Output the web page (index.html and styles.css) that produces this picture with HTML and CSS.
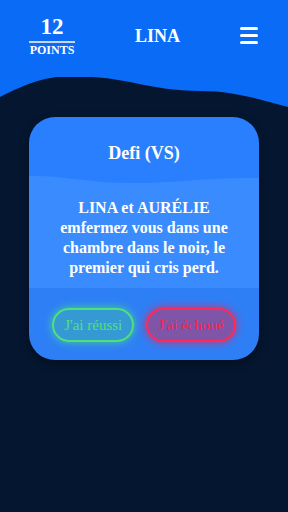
FILE: index.html
```html
<!DOCTYPE html>
<html lang="fr">
<head>
    <meta charset="UTF-8">
    <meta name="viewport" content="width=device-width, initial-scale=1.0">
    <title>Defi</title>
    <link rel="stylesheet" href="styles.css">
</head>
<body>
    <header class="topbar">
        <div class="topbar-row">
            <div class="score">
                <div class="score-num">12</div>
                <div class="score-label">POINTS</div>
            </div>
            <div class="player">LINA</div>
            <div class="burger">
                <span></span>
                <span></span>
                <span></span>
            </div>
        </div>
    </header>
    <!-- vague sous le header -->
    <svg class="header-wave" viewBox="0 0 288 34" preserveAspectRatio="none">
        <path d="M0,0 H288 V31 C262,25 238,15 200,15 C150,15 125,0 72,0 C42,0 20,11 0,21 Z" fill="#0a6cf6"/>
    </svg>

    <div class="card">
        <div class="card-head">
            <h2 class="card-title">Defi (VS)</h2>
            <svg class="card-wave" viewBox="0 0 230 20" preserveAspectRatio="none">
                <path d="M0,12 C30,11 60,19 100,19 C150,19 185,13 230,14 V20 H0 Z" fill="#3a8cfe"/>
            </svg>
        </div>
        <div class="card-body">
            <p>LINA et AURÉLIE emfermez vous dans une chambre dans le noir, le premier qui cris perd.</p>
        </div>
        <div class="card-foot">
            <button class="btn btn-ok">J'ai réussi</button>
            <button class="btn btn-ko">J'ai échoué</button>
        </div>
    </div>
</body>
</html>
```

FILE: styles.css
```css
body {
    font-family: 'Liberation Serif', 'Times New Roman', serif;
    background-color: #051630;
    color: #fff;
    margin: 0;
    padding: 0;
    min-height: 512px;
}

.topbar {
    background-color: #0a6cf6;
    padding: 14px 30px 20px 29px;
}

.topbar-row {
    display: flex;
    justify-content: space-between;
    align-items: center;
}

.score {
    width: 46px;
    text-align: center;
    font-weight: bold;
}

.score-num {
    font-size: 23px;
    line-height: 26px;
    border-bottom: 2px solid #c9d6ea;
    padding-bottom: 1px;
}

.score-label {
    font-size: 12px;
    line-height: 13px;
    padding-top: 1px;
}

.player {
    font-size: 18px;
    font-weight: bold;
    margin-top: 1px;
}

.burger {
    width: 18px;
    display: flex;
    flex-direction: column;
    gap: 4px;
}

.burger span {
    display: block;
    height: 3px;
    background-color: #fff;
    border-radius: 2px;
}

.header-wave {
    display: block;
    width: 100%;
    height: 34px;
    margin-top: -1px;
}

.card {
    width: 230px;
    margin: 7px auto 0;
    border-radius: 26px;
    overflow: hidden;
    box-shadow: 0px 3px 8px rgba(0, 0, 0, 0.35);
}

.card-head {
    background-color: #2a7ffe;
    padding-top: 25px;
}

.card-title {
    margin: 0;
    text-align: center;
    font-size: 18px;
    line-height: 22px;
}

.card-wave {
    display: block;
    width: 100%;
    height: 20px;
}

.card-body {
    background-color: #3a8cfe;
    padding: 14px 24px 10px;
}

.card-body p {
    margin: 0;
    text-align: center;
    font-size: 16px;
    font-weight: bold;
    line-height: 20px;
}

.card-foot {
    background-color: #2e7ff6;
    display: flex;
    justify-content: center;
    gap: 12px;
    padding: 20px 0 18px;
}

.btn {
    font-family: 'Liberation Serif', 'Times New Roman', serif;
    font-size: 15px;
    height: 34px;
    padding: 0 10px;
    border-radius: 17px;
    cursor: pointer;
}

.btn-ok {
    color: #52e07c;
    border: 2px solid #4fe07e;
    background-color: rgba(70, 215, 130, 0.3);
    box-shadow: 0 0 8px rgba(80, 230, 120, 0.8);
}

.btn-ko {
    color: #ff1f4a;
    border: 2px solid #ff2a55;
    background-color: rgba(225, 35, 70, 0.45);
    box-shadow: 0 0 9px rgba(255, 30, 70, 0.9);
}
```
